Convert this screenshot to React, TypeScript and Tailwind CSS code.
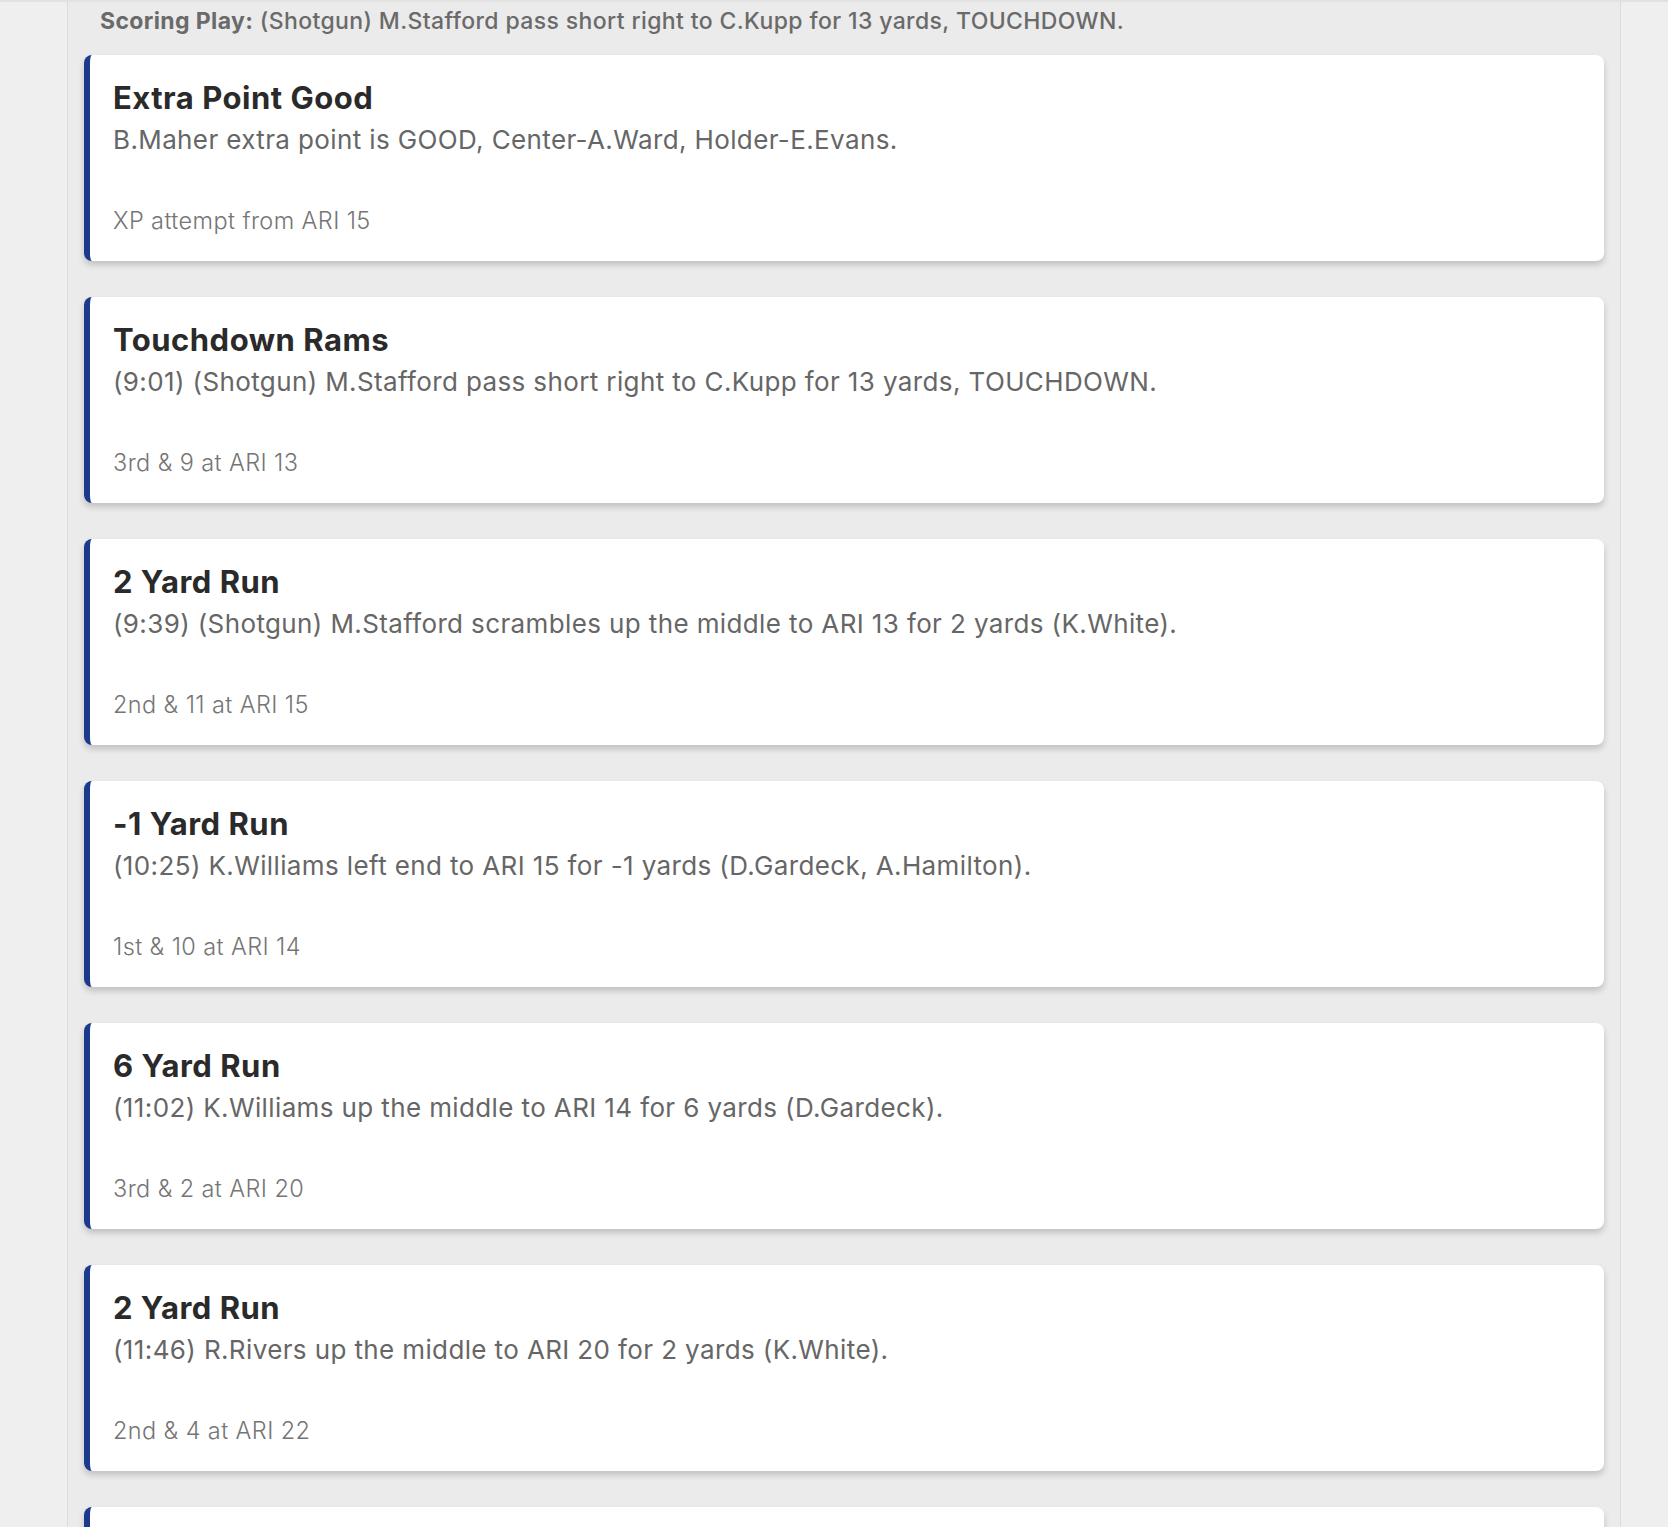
import React from 'react';

interface Play {
  title: string;
  text: string;
  down: string;
}

const plays: Play[] = [
  {
    title: 'Extra Point Good',
    text: 'B.Maher extra point is GOOD, Center-A.Ward, Holder-E.Evans.',
    down: 'XP attempt from ARI 15',
  },
  {
    title: 'Touchdown Rams',
    text: '(9:01) (Shotgun) M.Stafford pass short right to C.Kupp for 13 yards, TOUCHDOWN.',
    down: '3rd & 9 at ARI 13',
  },
  {
    title: '2 Yard Run',
    text: '(9:39) (Shotgun) M.Stafford scrambles up the middle to ARI 13 for 2 yards (K.White).',
    down: '2nd & 11 at ARI 15',
  },
  {
    title: '-1 Yard Run',
    text: '(10:25) K.Williams left end to ARI 15 for -1 yards (D.Gardeck, A.Hamilton).',
    down: '1st & 10 at ARI 14',
  },
  {
    title: '6 Yard Run',
    text: '(11:02) K.Williams up the middle to ARI 14 for 6 yards (D.Gardeck).',
    down: '3rd & 2 at ARI 20',
  },
  {
    title: '2 Yard Run',
    text: '(11:46) R.Rivers up the middle to ARI 20 for 2 yards (K.White).',
    down: '2nd & 4 at ARI 22',
  },
  {
    title: '3 Yard Run',
    text: '(12:20) K.Williams right guard to ARI 22 for 3 yards.',
    down: '1st & 10 at ARI 25',
  },
];

function PlayCard({ play }: { play: Play }) {
  return (
    <div className="bg-white rounded-[8px] border-l-[6px] border-[#1b3a8c] shadow-[0_4px_6px_rgba(0,0,0,0.18)] pl-[23px] pr-6 pt-[25px] pb-[24px]">
      <div className="text-[31px] leading-[36px] font-bold tracking-[0.5px] text-[#2a2a2a]">{play.title}</div>
      <div className="mt-[6px] text-[26px] leading-[36px] tracking-[0.38px] text-[#666666]">{play.text}</div>
      <div className="mt-[47px] text-[23.5px] leading-[32px] font-light tracking-[0.4px] text-[#757575]">{play.down}</div>
    </div>
  );
}

export default function App() {
  return (
    <div className="h-screen bg-[#efefef] font-['Inter',sans-serif] border-t-2 border-[#e2e2e2] overflow-hidden">
      <div className="ml-[67px] w-[1554px] h-full bg-[#ebebeb] border-x border-[#dcdcdc] pl-4 pr-4 pt-[3px]">
        <p className="pl-4 text-[23px] leading-[32px] font-medium tracking-[0.38px] text-[#6a6a6a]">
          <span className="font-bold">Scoring Play:</span> (Shotgun) M.Stafford pass short right to C.Kupp for 13 yards, TOUCHDOWN.
        </p>
        <div className="mt-[18px] flex flex-col gap-[36px]">
          {plays.map((p, i) => (
            <PlayCard key={i} play={p} />
          ))}
        </div>
      </div>
    </div>
  );
}
